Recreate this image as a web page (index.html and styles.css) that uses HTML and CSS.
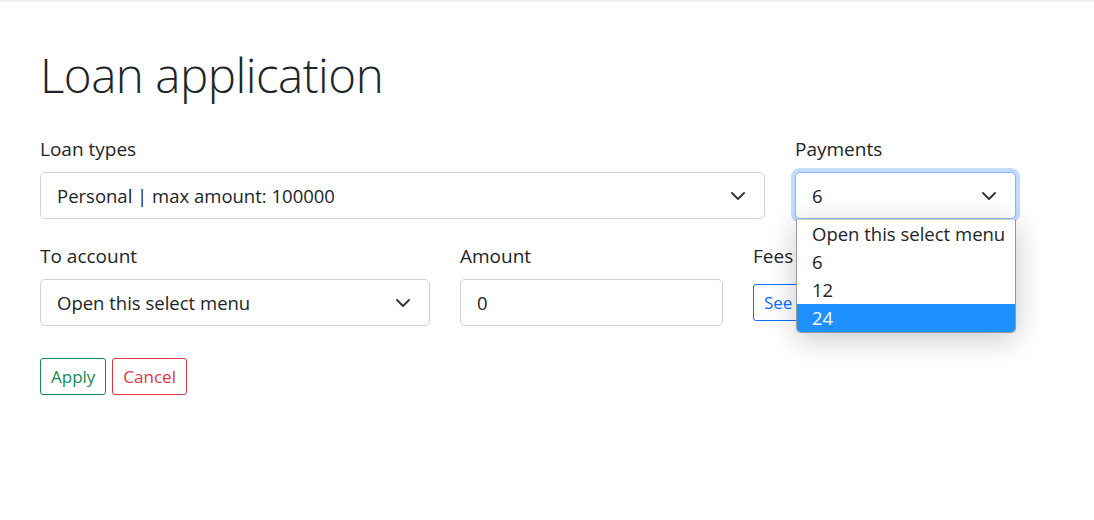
FILE: index.html
```html
<!DOCTYPE html>
<html lang="en">
<head>
<meta charset="utf-8">
<title>Loan application</title>
<link rel="stylesheet" href="styles.css">
</head>
<body>
<div class="topbar"></div>
<main class="page">
  <h1 class="title">Loan application</h1>
  <div class="row">
    <div class="field f-type">
      <label class="label">Loan types</label>
      <div class="select">
        <span>Personal | max amount: 100000</span>
        <svg class="chev" viewBox="0 0 16 16"><path d="M2 5l6 6 6-6" fill="none" stroke="#343a40" stroke-width="2" stroke-linecap="round" stroke-linejoin="round"/></svg>
      </div>
    </div>
    <div class="field f-pay">
      <label class="label">Payments</label>
      <div class="select focus">
        <span>6</span>
        <svg class="chev" viewBox="0 0 16 16"><path d="M2 5l6 6 6-6" fill="none" stroke="#343a40" stroke-width="2" stroke-linecap="round" stroke-linejoin="round"/></svg>
      </div>
      <ul class="dropdown">
        <li>Open this select menu</li>
        <li>6</li>
        <li>12</li>
        <li class="sel">24</li>
      </ul>
    </div>
  </div>
  <div class="row">
    <div class="field f-acc">
      <label class="label">To account</label>
      <div class="select">
        <span>Open this select menu</span>
        <svg class="chev" viewBox="0 0 16 16"><path d="M2 5l6 6 6-6" fill="none" stroke="#343a40" stroke-width="2" stroke-linecap="round" stroke-linejoin="round"/></svg>
      </div>
    </div>
    <div class="field f-amt">
      <label class="label">Amount</label>
      <div class="input">0</div>
    </div>
    <div class="field f-fees">
      <label class="label">Fees</label>
      <div class="fees-wrap"><button class="btn btn-blue">See</button></div>
    </div>
  </div>
  <div class="actions">
    <button class="btn btn-green">Apply</button>
    <button class="btn btn-red">Cancel</button>
  </div>
</main>
</body>
</html>
```
FILE: styles.css
```css
* { box-sizing: border-box; }
html, body { margin: 0; padding: 0; background: #fff; }
body {
  font-family: "Segoe UI", "Open Sans", "Noto Sans", sans-serif;
  color: #212529;
  font-size: 18.5px;
}
.topbar { height: 2px; background: #efefef; }
.page { padding: 44px 40px 0 40px; }
.title {
  margin: 0 0 34px 0;
  font-weight: 300;
  font-size: 47.5px;
  line-height: 57px;
  letter-spacing: -0.5px;
}
.row { display: flex; gap: 30px; margin-bottom: 25px; }
.field { position: relative; display: flex; flex-direction: column; }
.f-type { width: 725px; }
.f-pay { width: 221px; }
.f-acc { width: 390px; }
.f-amt { width: 263px; }
.f-fees { width: 43px; overflow: hidden; }
.label { font-size: 19px; line-height: 24px; margin-bottom: 11px; white-space: nowrap; }
.select, .input {
  height: 47px;
  border: 1px solid #ced4da;
  border-radius: 5px;
  display: flex; align-items: center;
  padding: 0 16px;
  font-size: 18.5px;
  background: #fff;
}
.select span { flex: 1; }
.chev { width: 16px; height: 16px; margin-right: 2px; }
.select.focus {
  border-color: #86b7fe;
  box-shadow: 0 0 0 4px rgba(13,110,253,.25);
}
.dropdown {
  position: absolute;
  left: 1px; top: 82px;
  width: 220px;
  margin: 0; padding: 0;
  list-style: none;
  background: #fff;
  border: 1px solid #9a9a9a;
  border-top-color: #d0d0d0;
  border-radius: 0 0 5px 5px;
  box-shadow: 0 6px 30px rgba(0,0,0,.22);
  overflow: hidden;
  z-index: 5;
}
.dropdown li {
  height: 28px; line-height: 28px;
  padding-left: 15px;
  font-size: 18.5px;
  white-space: nowrap;
}
.dropdown li.sel { background: #1e90ff; color: #fff; }
.fees-wrap { height: 47px; display: flex; align-items: center; }
.btn {
  font-family: inherit;
  font-size: 17px;
  line-height: 25px;
  padding: 5px 10px;
  border-radius: 3px;
  background: #fff;
  border: 1px solid;
  cursor: pointer;
}
.btn-blue { color: #0d6efd; border-color: #0d6efd; padding-right: 24px; }
.btn-green { color: #198754; border-color: #198754; }
.btn-red { color: #dc3545; border-color: #dc3545; }
.actions { display: flex; gap: 6px; margin-top: 32px; }
```
